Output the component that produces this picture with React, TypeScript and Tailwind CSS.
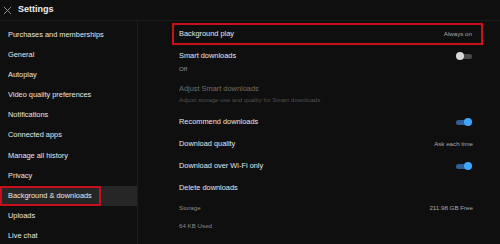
import React from "react";

const F = { fontFamily: '"Liberation Sans", Arial, sans-serif' };

function Toggle({ on }: { on: boolean }) {
  return on ? (
    <div className="relative w-[16px] h-[8px] mr-[1px]">
      <div className="absolute left-0 top-[1.5px] w-[15px] h-[5px] rounded-full bg-[#2f5f99]" />
      <div className="absolute right-0 top-0 w-[8px] h-[8px] rounded-full bg-[#3ea6ff]" />
    </div>
  ) : (
    <div className="relative w-[16px] h-[8px] mr-[1px]">
      <div className="absolute right-0 top-[1.5px] w-[15px] h-[5px] rounded-full bg-[#4a4a4a]" />
      <div className="absolute left-0 top-0 w-[8px] h-[8px] rounded-full bg-[#d8d8d8]" />
    </div>
  );
}

const side = [
  "Purchases and memberships",
  "General",
  "Autoplay",
  "Video quality preferences",
  "Notifications",
  "Connected apps",
  "Manage all history",
  "Privacy",
  "Background & downloads",
  "Uploads",
  "Live chat",
];

export default function App() {
  return (
    <div className="w-[500px] h-[244px] bg-[#0f0f0f] overflow-hidden flex flex-col" style={F}>
      <div className="h-[21px] flex items-center border-b border-[#1c1c1c] shrink-0">
        <svg width="9" height="9" viewBox="0 0 10 10" className="ml-[3px] mt-[1px]">
          <path d="M1 1 L9 9 M9 1 L1 9" stroke="#9a9a9a" strokeWidth="1" />
        </svg>
        <span className="ml-[6px] text-[9px] font-bold text-[#f1f1f1]">Settings</span>
      </div>
      <div className="flex flex-1">
        <div className="w-[138px] border-r border-[#1f1f1f] pt-[3px]">
          {side.map((s) => {
            const act = s === "Background & downloads";
            return (
              <div
                key={s}
                className={
                  "h-[20.2px] flex items-center pl-[8px] text-[7.4px] text-[#e8e8e8] " +
                  (act ? "bg-[#262626] relative" : "")
                }
              >
                {act && (
                  <div className="absolute left-0 top-0 w-[101px] h-full border-2 border-[#c8101a]" />
                )}
                {s}
              </div>
            );
          })}
        </div>
        <div className="flex-1 pl-[34px] pr-[17px] pt-[2px] text-[7.4px]">
          <div className="h-[22px] flex items-center justify-between border-2 border-[#c8101a] pl-[5px] pr-[9px]">
            <span className="text-[#e8e8e8]">Background play</span>
            <span className="text-[6.2px] text-[#aaaaaa]">Always on</span>
          </div>
          <div className="pl-[7px] pr-[10px]">
            <div className="h-[35px] flex items-start justify-between pt-[6px]">
              <div className="flex flex-col">
                <span className="text-[#e8e8e8] leading-[10px]">Smart downloads</span>
                <span className="text-[6.2px] text-[#9a9a9a] mt-[4px] leading-[8px]">Off</span>
              </div>
              <div className="mt-[1px]"><Toggle on={false} /></div>
            </div>
            <div className="h-[31px] flex flex-col pt-[4px]">
              <span className="text-[#6e6e6e] leading-[10px]">Adjust Smart downloads</span>
              <span className="text-[6.2px] text-[#4f4f4f] mt-[2px] leading-[8px]">
                Adjust storage use and quality for Smart downloads
              </span>
            </div>
            <div className="h-[22px] flex items-center justify-between">
              <span className="text-[#e8e8e8]">Recommend downloads</span>
              <Toggle on={true} />
            </div>
            <div className="h-[22px] flex items-center justify-between">
              <span className="text-[#e8e8e8]">Download quality</span>
              <span className="text-[6.2px] text-[#aaaaaa]">Ask each time</span>
            </div>
            <div className="h-[22px] flex items-center justify-between">
              <span className="text-[#e8e8e8]">Download over Wi-Fi only</span>
              <Toggle on={true} />
            </div>
            <div className="h-[21px] flex items-center justify-between">
              <span className="text-[#e8e8e8]">Delete downloads</span>
            </div>
            <div className="h-[19px] flex items-center justify-between">
              <span className="text-[6.2px] text-[#8a8a8a]">Storage</span>
              <span className="text-[6.2px] text-[#aaaaaa]">211.98 GB Free</span>
            </div>
            <div className="h-[17px] flex items-center">
              <span className="text-[6.2px] text-[#8a8a8a]">64 KB Used</span>
            </div>
          </div>
        </div>
      </div>
    </div>
  );
}
